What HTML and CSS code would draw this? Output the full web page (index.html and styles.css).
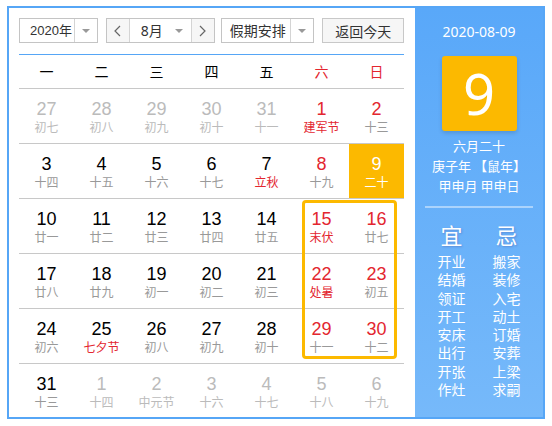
FILE: index.html
```html
<!DOCTYPE html>
<html lang="zh">
<head>
  <meta charset="UTF-8">
  <title>万年历</title>
  <link rel="stylesheet" href="styles.css">
</head>
<body>

<div class="calendar">
  <div class="main">
    <div class="toolbar">
      <div class="select year">
        <span class="select-text">2020年</span>
        <span class="select-arrow split"><i class="tri"></i></span>
      </div>
      <div class="month-group">
        <span class="step">
          <svg width="7" height="12" viewBox="0 0 7 12"><polyline points="6,1 1,6 6,11" fill="none" stroke="#666" stroke-width="1.2"/></svg>
        </span>
        <div class="select month">
          <span class="select-text">8月</span>
          <span class="select-arrow"><i class="tri"></i></span>
        </div>
        <span class="step">
          <svg width="7" height="12" viewBox="0 0 7 12"><polyline points="1,1 6,6 1,11" fill="none" stroke="#666" stroke-width="1.2"/></svg>
        </span>
      </div>
      <div class="select holiday">
        <span class="select-text">假期安排</span>
        <span class="select-arrow split"><i class="tri"></i></span>
      </div>
      <button class="today-btn">返回今天</button>
    </div>

    <div class="week">
      <span>一</span><span>二</span><span>三</span><span>四</span><span>五</span>
      <span class="red">六</span><span class="red">日</span>
    </div>

    <div class="days">
      <div class="day other"><b>27</b><small>初七</small></div>
      <div class="day other"><b>28</b><small>初八</small></div>
      <div class="day other"><b>29</b><small>初九</small></div>
      <div class="day other"><b>30</b><small>初十</small></div>
      <div class="day other"><b>31</b><small>十一</small></div>
      <div class="day weekend fest"><b>1</b><small>建军节</small></div>
      <div class="day weekend"><b>2</b><small>十三</small></div>

      <div class="day"><b>3</b><small>十四</small></div>
      <div class="day"><b>4</b><small>十五</small></div>
      <div class="day"><b>5</b><small>十六</small></div>
      <div class="day"><b>6</b><small>十七</small></div>
      <div class="day fest"><b>7</b><small>立秋</small></div>
      <div class="day weekend"><b>8</b><small>十九</small></div>
      <div class="day today"><b>9</b><small>二十</small></div>

      <div class="day"><b>10</b><small>廿一</small></div>
      <div class="day"><b>11</b><small>廿二</small></div>
      <div class="day"><b>12</b><small>廿三</small></div>
      <div class="day"><b>13</b><small>廿四</small></div>
      <div class="day"><b>14</b><small>廿五</small></div>
      <div class="day weekend fest"><b>15</b><small>末伏</small></div>
      <div class="day weekend"><b>16</b><small>廿七</small></div>

      <div class="day"><b>17</b><small>廿八</small></div>
      <div class="day"><b>18</b><small>廿九</small></div>
      <div class="day"><b>19</b><small>初一</small></div>
      <div class="day"><b>20</b><small>初二</small></div>
      <div class="day"><b>21</b><small>初三</small></div>
      <div class="day weekend fest"><b>22</b><small>处暑</small></div>
      <div class="day weekend"><b>23</b><small>初五</small></div>

      <div class="day"><b>24</b><small>初六</small></div>
      <div class="day fest"><b>25</b><small>七夕节</small></div>
      <div class="day"><b>26</b><small>初八</small></div>
      <div class="day"><b>27</b><small>初九</small></div>
      <div class="day"><b>28</b><small>初十</small></div>
      <div class="day weekend"><b>29</b><small>十一</small></div>
      <div class="day weekend"><b>30</b><small>十二</small></div>

      <div class="day last"><b>31</b><small>十三</small></div>
      <div class="day last other"><b>1</b><small>十四</small></div>
      <div class="day last other"><b>2</b><small>中元节</small></div>
      <div class="day last other"><b>3</b><small>十六</small></div>
      <div class="day last other"><b>4</b><small>十七</small></div>
      <div class="day last other"><b>5</b><small>十八</small></div>
      <div class="day last other"><b>6</b><small>十九</small></div>

      <!-- 假期框 -->
      <div class="holiday-box"></div>
    </div>
  </div>

  <div class="side">
    <p class="side-date">2020-08-09</p>
    <div class="big-day">9</div>
    <p class="lunar">六月二十</p>
    <p class="lunar">庚子年 【鼠年】</p>
    <p class="lunar">甲申月 甲申日</p>
    <div class="divider"></div>
    <div class="almanac">
      <div class="col">
        <h3>宜</h3>
        <span>开业</span><span>结婚</span><span>领证</span><span>开工</span>
        <span>安床</span><span>出行</span><span>开张</span><span>作灶</span>
      </div>
      <div class="col">
        <h3>忌</h3>
        <span>搬家</span><span>装修</span><span>入宅</span><span>动土</span>
        <span>订婚</span><span>安葬</span><span>上梁</span><span>求嗣</span>
      </div>
    </div>
  </div>
</div>

</body>
</html>
```

FILE: styles.css
```css
* {
  box-sizing: border-box;
  margin: 0;
  padding: 0;
}

body {
  background: #fff;
  font-family: "Liberation Sans", "Noto Sans CJK SC", sans-serif;
  color: #000;
}

.calendar {
  display: flex;
  width: 538px;
  height: 413px;
  margin: 6px 0 0 7px;
  border: 2px solid #56a6f6;
}

.main {
  width: 406px;
  padding: 10px 11px 0 10px;
}

/* 工具栏 */
.toolbar {
  display: flex;
  height: 25px;
  font-size: 14px;
  color: #333;
}

.select {
  display: flex;
  height: 25px;
  border: 1px solid #c4c4c4;
  background: #fff;
}

.select-text {
  flex: 1;
  line-height: 23px;
  padding-left: 10px;
  white-space: nowrap;
  font-family: "Noto Sans", "Noto Sans CJK SC", sans-serif;
}

.select-arrow {
  width: 23px;
  flex: none;
  display: flex;
  align-items: center;
  justify-content: center;
}

.select-arrow.split {
  border-left: 1px solid #d4d4d4;
}

.tri {
  width: 0;
  height: 0;
  border-left: 4px solid transparent;
  border-right: 4px solid transparent;
  border-top: 4px solid #999;
}

.year {
  width: 79px;
}

.year .select-text {
  padding-left: 10px;
  font-size: 13px;
  font-family: "Liberation Sans", "Noto Sans CJK SC", sans-serif;
}

.month-group {
  display: flex;
  margin-left: 8px;
  height: 25px;
  border: 1px solid #c4c4c4;
}

.step {
  width: 22px;
  background: #f6f6f6;
  display: flex;
  align-items: center;
  justify-content: center;
}

.month {
  width: 63px;
  border: none;
  border-left: 1px solid #d4d4d4;
  border-right: 1px solid #d4d4d4;
  height: 23px;
}

.month .select-text {
  padding-left: 11px;
}

.holiday {
  width: 94px;
  margin-left: 6px;
}

.holiday .select-text {
  padding-left: 8px;
}

.today-btn {
  width: 82px;
  height: 25px;
  margin-left: 8px;
  border: 1px solid #c8c8c8;
  background: #f6f6f6;
  font-size: 14px;
  color: #333;
  font-family: "Noto Sans CJK SC", sans-serif;
}

/* 星期 */
.week {
  display: grid;
  grid-template-columns: repeat(7, 55px);
  margin-top: 11px;
  height: 35px;
  border-top: 1px solid #56a6f6;
  border-bottom: 1px solid #c8c8c8;
  font-size: 14px;
  text-align: center;
  line-height: 33px;
  font-family: "Noto Sans CJK SC", sans-serif;
}

.red {
  color: #e3262f;
}

/* 日期 */
.days {
  position: relative;
  display: grid;
  grid-template-columns: repeat(7, 55px);
}

.day {
  height: 55px;
  border-bottom: 1px solid #c8c8c8;
  text-align: center;
  padding-top: 10px;
}

.day.last {
  height: 53px;
  border-bottom: none;
}

.day b {
  display: block;
  font-weight: normal;
  font-size: 18px;
  line-height: 20px;
}

.day small {
  display: block;
  font-size: 12px;
  line-height: 16px;
  color: #999;
  font-family: "Noto Sans CJK SC", sans-serif;
}

.day.weekend b {
  color: #e3262f;
}

.day.fest small {
  color: #e3262f;
}

.day.other b,
.day.other small {
  color: #bbb;
}

.day.today {
  background: #fcb900;
}

.day.today b,
.day.today small {
  color: #fff;
}

.holiday-box {
  position: absolute;
  left: 283px;
  top: 111px;
  width: 95px;
  height: 159px;
  border: 3px solid #fcb900;
  border-radius: 4px;
}

/* 右侧 */
.side {
  width: 130px;
  background: linear-gradient(#59a8f9, #76b9fa);
  color: #fff;
  text-align: center;
  padding-top: 14px;
  font-family: "Noto Sans", "Noto Sans CJK SC", sans-serif;
}

.side-date {
  font-size: 14px;
  line-height: 20px;
}

.big-day {
  width: 75px;
  height: 75px;
  margin: 14px auto 5px;
  background: #fcb900;
  border-radius: 3px;
  box-shadow: 0 2px 4px rgba(0, 0, 0, 0.15);
  font-size: 56px;
  line-height: 74px;
}

.lunar {
  font-size: 13px;
  line-height: 20px;
  font-family: "Noto Sans CJK SC", sans-serif;
}

.divider {
  height: 2px;
  margin: 10px 10px 0;
  background: rgba(255, 255, 255, 0.45);
}

.almanac {
  display: flex;
  justify-content: center;
  gap: 15px;
  margin-top: 14px;
  font-family: "Noto Sans CJK SC", sans-serif;
}

.almanac .col {
  display: flex;
  flex-direction: column;
  width: 40px;
}

.almanac h3 {
  font-size: 22px;
  font-weight: normal;
  line-height: 24px;
  margin-bottom: 6px;
  text-shadow: 1px 1px 2px rgba(60, 60, 140, 0.3);
}

.almanac span {
  font-size: 14px;
  line-height: 18.3px;
}
```
